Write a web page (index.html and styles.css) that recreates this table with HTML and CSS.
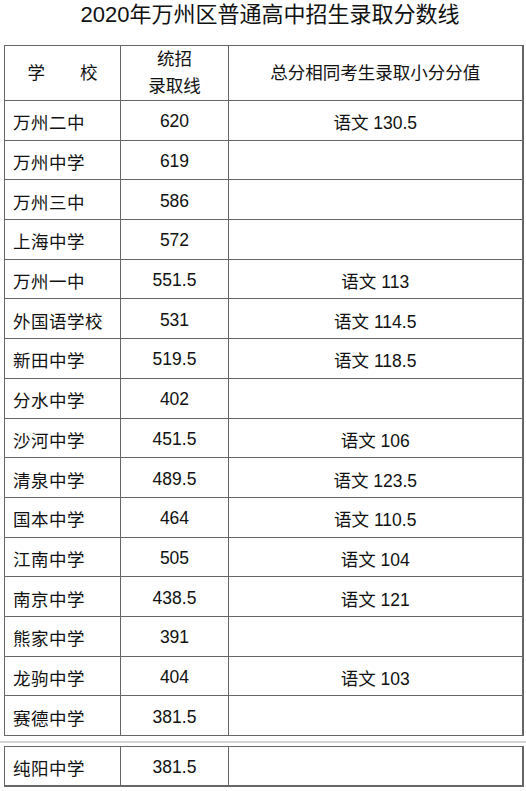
FILE: index.html
```html
<!DOCTYPE html>
<html lang="zh">
<head>
<meta charset="utf-8">
<link rel="stylesheet" href="styles.css">
</head>
<body>
<h1 class="title">2020年万州区普通高中招生录取分数线</h1>
<table class="scores">
  <colgroup><col class="c1"><col class="c2"><col class="c3"></colgroup>
  <thead>
    <tr class="head">
      <th>学　　校</th>
      <th>统招<br>录取线</th>
      <th>总分相同考生录取小分分值</th>
    </tr>
  </thead>
  <tbody>
    <tr><td class="name">万州二中</td><td>620</td><td>语文 130.5</td></tr>
    <tr><td class="name">万州中学</td><td>619</td><td></td></tr>
    <tr><td class="name">万州三中</td><td>586</td><td></td></tr>
    <tr><td class="name">上海中学</td><td>572</td><td></td></tr>
    <tr><td class="name">万州一中</td><td>551.5</td><td>语文 113</td></tr>
    <tr><td class="name">外国语学校</td><td>531</td><td>语文 114.5</td></tr>
    <tr><td class="name">新田中学</td><td>519.5</td><td>语文 118.5</td></tr>
    <tr><td class="name">分水中学</td><td>402</td><td></td></tr>
    <tr><td class="name">沙河中学</td><td>451.5</td><td>语文 106</td></tr>
    <tr><td class="name">清泉中学</td><td>489.5</td><td>语文 123.5</td></tr>
    <tr><td class="name">国本中学</td><td>464</td><td>语文 110.5</td></tr>
    <tr><td class="name">江南中学</td><td>505</td><td>语文 104</td></tr>
    <tr><td class="name">南京中学</td><td>438.5</td><td>语文 121</td></tr>
    <tr><td class="name">熊家中学</td><td>391</td><td></td></tr>
    <tr><td class="name">龙驹中学</td><td>404</td><td>语文 103</td></tr>
    <tr><td class="name">赛德中学</td><td>381.5</td><td></td></tr>
  </tbody>
</table>
<div class="split"></div>
<table class="scores second">
  <colgroup><col class="c1"><col class="c2"><col class="c3"></colgroup>
  <tbody>
    <tr><td class="name">纯阳中学</td><td>381.5</td><td></td></tr>
  </tbody>
</table>
</body>
</html>
```
FILE: styles.css
```css
html, body {
  margin: 0;
  padding: 0;
  background: #fff;
}
body {
  width: 526px;
  height: 791px;
  overflow: hidden;
  font-family: "Liberation Sans", "Noto Sans CJK SC", sans-serif;
  color: #111;
}
.title {
  margin: 0;
  height: 45px;
  padding: 1px 0 0 14px;
  box-sizing: border-box;
  font-size: 22px;
  font-weight: normal;
  line-height: 28px;
  text-align: center;
}
.scores {
  margin-left: 4px;
  width: 518px;
  border-collapse: collapse;
  table-layout: fixed;
  font-size: 17.5px;
}
.c1 { width: 116px; }
.c2 { width: 108px; }
.c3 { width: 294px; }
.scores th,
.scores td {
  border: 1px solid #666;
  padding: 0;
  text-align: center;
  vertical-align: middle;
  font-weight: normal;
}
.scores .head th {
  height: 54px;
  line-height: 27px;
}
.scores tbody tr {
  height: 39.7px;
}
.scores tbody td {
  padding-top: 3px;
}
.scores td.name {
  text-align: left;
  padding-left: 8px;
  letter-spacing: 0.5px;
}
.scores tr > :last-child {
  border-right: 2px solid #666;
}
.split {
  height: 2px;
  margin-top: 5px;
  background: #d4d4d4;
}
.second {
  margin-top: 3px;
}
.second tbody tr {
  height: 39px;
}
.second tr:last-child td {
  border-bottom: 2px solid #666;
}
```
